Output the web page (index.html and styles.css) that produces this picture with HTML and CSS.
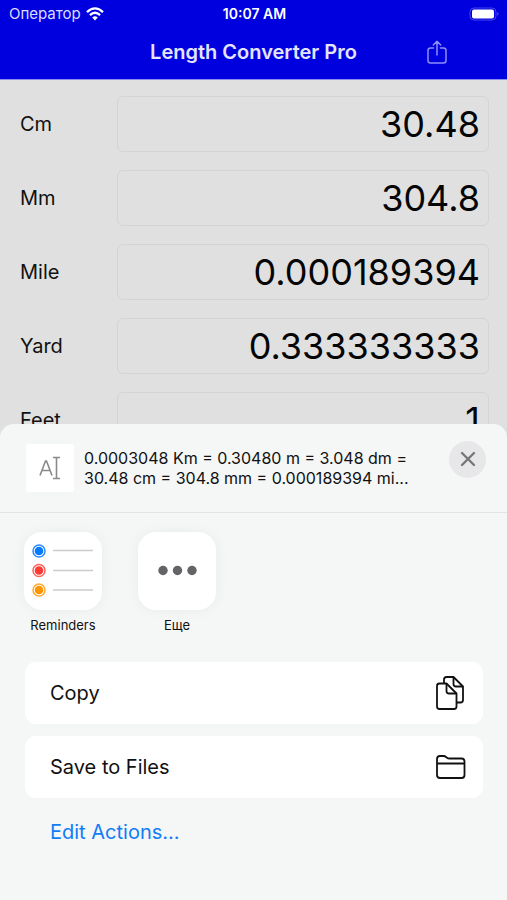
FILE: index.html
```html
<!DOCTYPE html>
<html lang="ru">
<head>
<meta charset="utf-8">
<meta name="viewport" content="width=device-width, initial-scale=1">
<title>Length Converter Pro</title>
<link rel="stylesheet" href="styles.css">
</head>
<body>
<header class="top">
  <div class="status">
    <div class="carrier">
      <span>Оператор</span>
      <svg width="18" height="14" viewBox="0 0 18 14" fill="none" stroke="#fff" stroke-width="2.3">
        <path d="M1 5.2Q9-2.4 17 5.2M3.9 8.2Q9 3.4 14.1 8.2"/>
        <path d="M6.2 10.4Q9 8.2 11.8 10.4L9 13.4Z" fill="#fff" stroke="none"/>
      </svg>
    </div>
    <span class="clock">10:07 AM</span>
    <svg class="battery" width="31" height="14" viewBox="0 0 31 14">
      <rect x="1" y="1" width="26" height="12" rx="4" fill="none" stroke="#4444ec"/>
      <rect x="3" y="2.500" width="22" height="9" rx="2" fill="#fff"/>
      <path d="M28.5 5Q30.5 7 28.5 9Z" fill="#6666f2"/>
    </svg>
  </div>
  <div class="nav">
    <h1>Length Converter Pro</h1>
    <button class="share" type="button" aria-label="Share">
      <svg width="20" height="25" viewBox="0 0 20 25" fill="none" stroke="#8f8ff8" stroke-width="1.5" stroke-linecap="round" stroke-linejoin="round">
        <path d="M6.5 8H3.5Q1 8 1 10.5V20.500Q1 23 3.500 23H16.500Q19 23 19 20.500V10.500Q19 8 16.500 8H13.500M10 15V1.500M6.300 5L10 1.300L13.700 5"/>
      </svg>
    </button>
  </div>
</header>
<main class="units">
  <div class="unit"><label for="cm">Cm</label><input id="cm" type="text" value="30.48"></div>
  <div class="unit"><label for="mm">Mm</label><input id="mm" type="text" value="304.8"></div>
  <div class="unit"><label for="mile">Mile</label><input id="mile" type="text" value="0.000189394"></div>
  <div class="unit"><label for="yard">Yard</label><input id="yard" type="text" value="0.333333333"></div>
  <div class="unit"><label for="feet">Feet</label><input id="feet" type="text" value="1"></div>
</main>
<section class="sheet" role="dialog" aria-label="Share">
  <div class="summary">
    <div class="thumb">
      <svg width="48" height="48" viewBox="0 0 48 48" fill="none" stroke="#8a8a8a" stroke-width="1.6">
        <path d="M14 31.500L19.500 17H20.500L26 31.500M16 26.500H24"/>
        <path d="M27 13.500H34M27 34.500H34M30.500 13.500V34.500"/>
      </svg>
    </div>
    <p>0.0003048 Km = 0.30480 m = 3.048 dm =<br>30.48 cm = 304.8 mm = 0.000189394 mi...</p>
    <button class="close" type="button" aria-label="Close">
      <svg width="16" height="16" viewBox="0 0 16 16" stroke="#77777b" stroke-width="2.4" stroke-linecap="round"><path d="M2 2L14 14M14 2L2 14"/></svg>
    </button>
  </div>
  <div class="apps">
    <button class="app" type="button">
      <span class="tile">
        <svg width="78" height="78" viewBox="0 0 78 78" fill="none">
          <path d="M29 18.500H69M29 38.500H69M29 58H69" stroke="#cbcbcd" stroke-width="1.5"/>
          <g stroke-width="1.5">
            <circle cx="15" cy="19" r="6" stroke="#2e8bff"/><circle cx="15" cy="38.500" r="6" stroke="#fb655e"/><circle cx="15" cy="58" r="6" stroke="#ffaa32"/>
          </g>
          <circle cx="15" cy="19" r="4.300" fill="#067aff"/><circle cx="15" cy="38.500" r="4.300" fill="#fb3c32"/><circle cx="15" cy="58" r="4.300" fill="#ff9500"/>
        </svg>
      </span>
      <span>Reminders</span>
    </button>
    <button class="app" type="button">
      <span class="tile">
        <svg width="78" height="78" viewBox="0 0 78 78" fill="#646467"><circle cx="25" cy="38.500" r="4.700"/><circle cx="39.500" cy="38.500" r="4.700"/><circle cx="54" cy="38.500" r="4.700"/></svg>
      </span>
      <span>Еще</span>
    </button>
  </div>
  <div class="actions">
    <button class="action" type="button">
      <span>Copy</span>
      <svg width="32" height="36" viewBox="0 0 32 36" fill="none" stroke="#111" stroke-width="1.800" stroke-linejoin="round">
        <path d="M9 8V4.500Q9 2 11.500 2H18.500L28 11.500V25Q28 27.500 25.500 27.500H21.500"/>
        <path d="M18.500 2V9Q18.500 11.500 21 11.500H28"/>
        <path d="M4.500 8.500H11.500L21.500 18.500V31.500Q21.500 34 19 34H4.500Q2 34 2 31.500V11Q2 8.500 4.500 8.500Z"/>
        <path d="M11.500 8.500V16Q11.500 18.500 14 18.500H21.500"/>
      </svg>
    </button>
    <button class="action" type="button">
      <span>Save to Files</span>
      <svg width="32" height="26" viewBox="0 0 32 26" fill="none" stroke="#111" stroke-width="1.800" stroke-linejoin="round">
        <path d="M2 21V5Q2 2 5 2H8.500Q10 2 11 3L12 3.700Q13 4.500 14.500 4.500H26.500Q29.500 4.500 29.500 7.500V21Q29.500 24 26.500 24H5Q2 24 2 21ZM2 9.500H29.500"/>
      </svg>
    </button>
    <a class="edit" href="#">Edit Actions...</a>
  </div>
</section>
</body>
</html>
```
FILE: styles.css
```css
* { box-sizing: border-box; }

body {
  margin: 0;
  min-height: 100vh;
  overflow: hidden;
  background: #e0e0e0;
  color: #111;
  font-family: Inter, "Liberation Sans", sans-serif;
}

button {
  margin: 0;
  padding: 0;
  border: 0;
  background: none;
  color: inherit;
  font: inherit;
}

svg { display: block; flex: none; }
h1, p { margin: 0; }

.top {
  background: #0000df;
  border-bottom: 1px solid #8c8cf0;
  color: #fff;
}

.status {
  display: grid;
  grid-template-columns: 1fr auto 1fr;
  align-items: center;
  height: 27px;
  padding: 0 7px 0 9px;
  font-size: 15px;
}

.carrier { display: flex; align-items: center; gap: 5px; color: #dcdcff; }
.clock { font-size: 14px; font-weight: 600; }
.battery { justify-self: end; }

.nav {
  display: grid;
  grid-template-columns: 1fr auto 1fr;
  align-items: center;
  height: 52px;
  padding-bottom: 2px;
}

.nav h1 {
  grid-column: 2;
  color: #e4e4ff;
  font-size: 20px;
  font-weight: 600;
}

.share { justify-self: end; margin-right: 60px; }

.units {
  display: grid;
  gap: 18px;
  padding: 16px 18px 0 20px;
}

.unit {
  display: grid;
  grid-template-columns: 97px 1fr;
  align-items: center;
  font-size: 20px;
}

.unit input {
  width: 100%;
  min-width: 0;
  height: 56px;
  padding: 0 8px;
  border: 1px solid #d4d4d4;
  border-radius: 6px;
  background: transparent;
  color: #050505;
  font: 36px Inter, "Liberation Sans", sans-serif;
  text-align: right;
}

.sheet {
  position: fixed;
  right: 0;
  bottom: 0;
  left: 0;
  padding-bottom: 54px;
  border-radius: 14px 14px 0 0;
  background: #f5f6f6;
}

.summary {
  display: flex;
  align-items: center;
  height: 89px;
  padding: 0 21px 0 26px;
  border-bottom: 1px solid #e2e3e3;
}

.thumb {
  margin-right: 10px;
  border-radius: 3px;
  background: #fff;
}

.summary p {
  flex: 1;
  font-size: 16px;
  line-height: 20px;
  white-space: nowrap;
}

.close {
  display: grid;
  place-items: center;
  width: 37px;
  height: 37px;
  margin-bottom: 18px;
  border-radius: 50%;
  background: #e7e7ea;
}

.apps {
  display: flex;
  gap: 36px;
  padding: 19px 24px 0;
}

.app {
  display: flex;
  flex-direction: column;
  align-items: center;
  gap: 6px;
  width: 78px;
  font-size: 13px;
  line-height: 18px;
}

.tile {
  border-radius: 18px;
  background: #fff;
  box-shadow: 0 0 14px rgba(0, 0, 0, 0.05);
}

.actions {
  display: grid;
  gap: 12px;
  padding: 28px 24px 0 25px;
}

.action {
  display: flex;
  align-items: center;
  justify-content: space-between;
  height: 62px;
  padding: 0 16px 0 25px;
  border-radius: 11px;
  background: #fff;
  font-size: 20px;
}

.edit {
  justify-self: start;
  margin: 8px 25px 0;
  color: #107cf6;
  font-size: 20px;
  line-height: 28px;
  text-decoration: none;
}
```
